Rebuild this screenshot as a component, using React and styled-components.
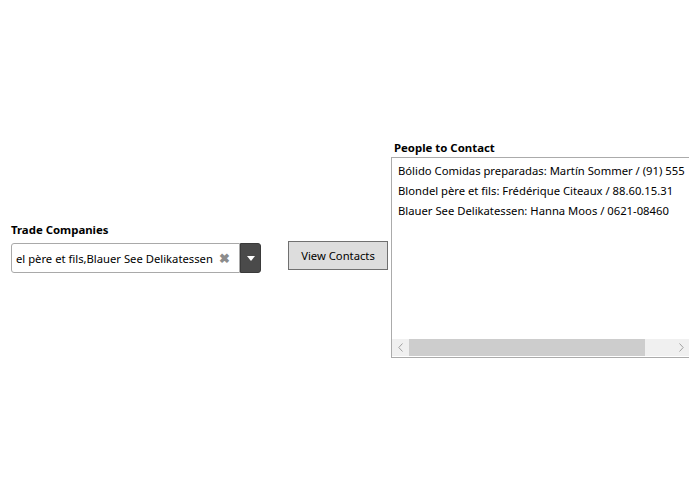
import React from "react";
import styled, { createGlobalStyle } from "styled-components";

const GlobalStyle = createGlobalStyle`
  html, body {
    margin: 0;
    padding: 0;
    background: #fff;
    font-family: "Segoe UI", "Noto Sans", sans-serif;
    font-size: 11.25px;
    color: #000;
  }
`;

const Page = styled.div`
  width: 689px;
  height: 500px;
  overflow: hidden;
  display: flex;
  align-items: flex-start;
  padding-left: 11px;
  box-sizing: border-box;
`;

const Column = styled.div`
  display: flex;
  flex-direction: column;
  margin-top: ${(p) => p.$top}px;
  margin-left: ${(p) => p.$left || 0}px;
  flex-shrink: 0;
`;

const Label = styled.div`
  font-weight: 700;
  font-size: 11.4px;
  line-height: 16px;
  margin-bottom: ${(p) => p.$gap || 5}px;
  padding-left: ${(p) => p.$indent || 0}px;
`;

const ComboRow = styled.div`
  display: flex;
  height: 30px;
`;

const ComboInput = styled.div`
  width: 229px;
  box-sizing: border-box;
  border: 1px solid #a9a9a9;
  border-radius: 3px 0 0 3px;
  display: flex;
  align-items: center;
  padding: 0 9px 0 4px;
  overflow: hidden;
`;

const ComboText = styled.div`
  flex: 1;
  white-space: nowrap;
`;

const ClearIcon = styled.span`
  color: #8c8c8c;
  font-size: 13px;
  font-weight: 700;
  line-height: 1;
`;

const DropButton = styled.div`
  width: 21px;
  background: #4a4a4a;
  border: 1px solid #3a3a3a;
  border-radius: 0 3px 3px 0;
  box-sizing: border-box;
  display: flex;
  align-items: center;
  justify-content: center;
`;

const Button = styled.button`
  width: 100px;
  height: 29px;
  background: #dddddd;
  border: 1px solid #707070;
  font-family: inherit;
  font-size: 11.25px;
  color: #000;
  padding: 0;
`;

const ListBox = styled.div`
  width: 300px;
  height: 201px;
  box-sizing: border-box;
  border: 1px solid #ababab;
  display: flex;
  flex-direction: column;
`;

const Items = styled.div`
  flex: 1;
  overflow: hidden;
  padding: 3px 0 0 6px;
`;

const Item = styled.div`
  white-space: nowrap;
  line-height: 20px;
`;

const ScrollBar = styled.div`
  height: 17px;
  display: flex;
  background: #f0f0f0;
  margin-bottom: 1px;
`;

const Arrow = styled.div`
  width: 17px;
  display: flex;
  align-items: center;
  justify-content: center;
`;

const Thumb = styled.div`
  width: 236px;
  background: #cdcdcd;
`;

const Track = styled.div`
  flex: 1;
`;

const items = [
  "Bólido Comidas preparadas: Martín Sommer / (91) 555",
  "Blondel père et fils: Frédérique Citeaux / 88.60.15.31",
  "Blauer See Delikatessen: Hanna Moos / 0621-08460",
];

export default function App() {
  return (
    <>
      <GlobalStyle />
      <Page>
        <Column $top={222}>
          <Label>Trade Companies</Label>
          <ComboRow>
            <ComboInput>
              <ComboText>el père et fils,Blauer See Delikatessen</ComboText>
              <ClearIcon>✖</ClearIcon>
            </ComboInput>
            <DropButton>
              <svg width="8" height="5" viewBox="0 0 8 5">
                <path d="M0 0h8L4 5z" fill="#fff" />
              </svg>
            </DropButton>
          </ComboRow>
        </Column>
        <Column $top={241} $left={27}>
          <Button>View Contacts</Button>
        </Column>
        <Column $top={140} $left={3}>
          <Label $indent={3} $gap={1}>People to Contact</Label>
          <ListBox>
            <Items>
              {items.map((t) => (
                <Item key={t}>{t}</Item>
              ))}
            </Items>
            <ScrollBar>
              <Arrow>
                <svg width="5" height="9" viewBox="0 0 5 9">
                  <path d="M4.5 0.5L0.8 4.5L4.5 8.5" stroke="#a0a0a0" fill="none" />
                </svg>
              </Arrow>
              <Thumb />
              <Track />
              <Arrow>
                <svg width="5" height="9" viewBox="0 0 5 9">
                  <path d="M0.5 0.5L4.2 4.5L0.5 8.5" stroke="#a0a0a0" fill="none" />
                </svg>
              </Arrow>
            </ScrollBar>
          </ListBox>
        </Column>
      </Page>
    </>
  );
}
